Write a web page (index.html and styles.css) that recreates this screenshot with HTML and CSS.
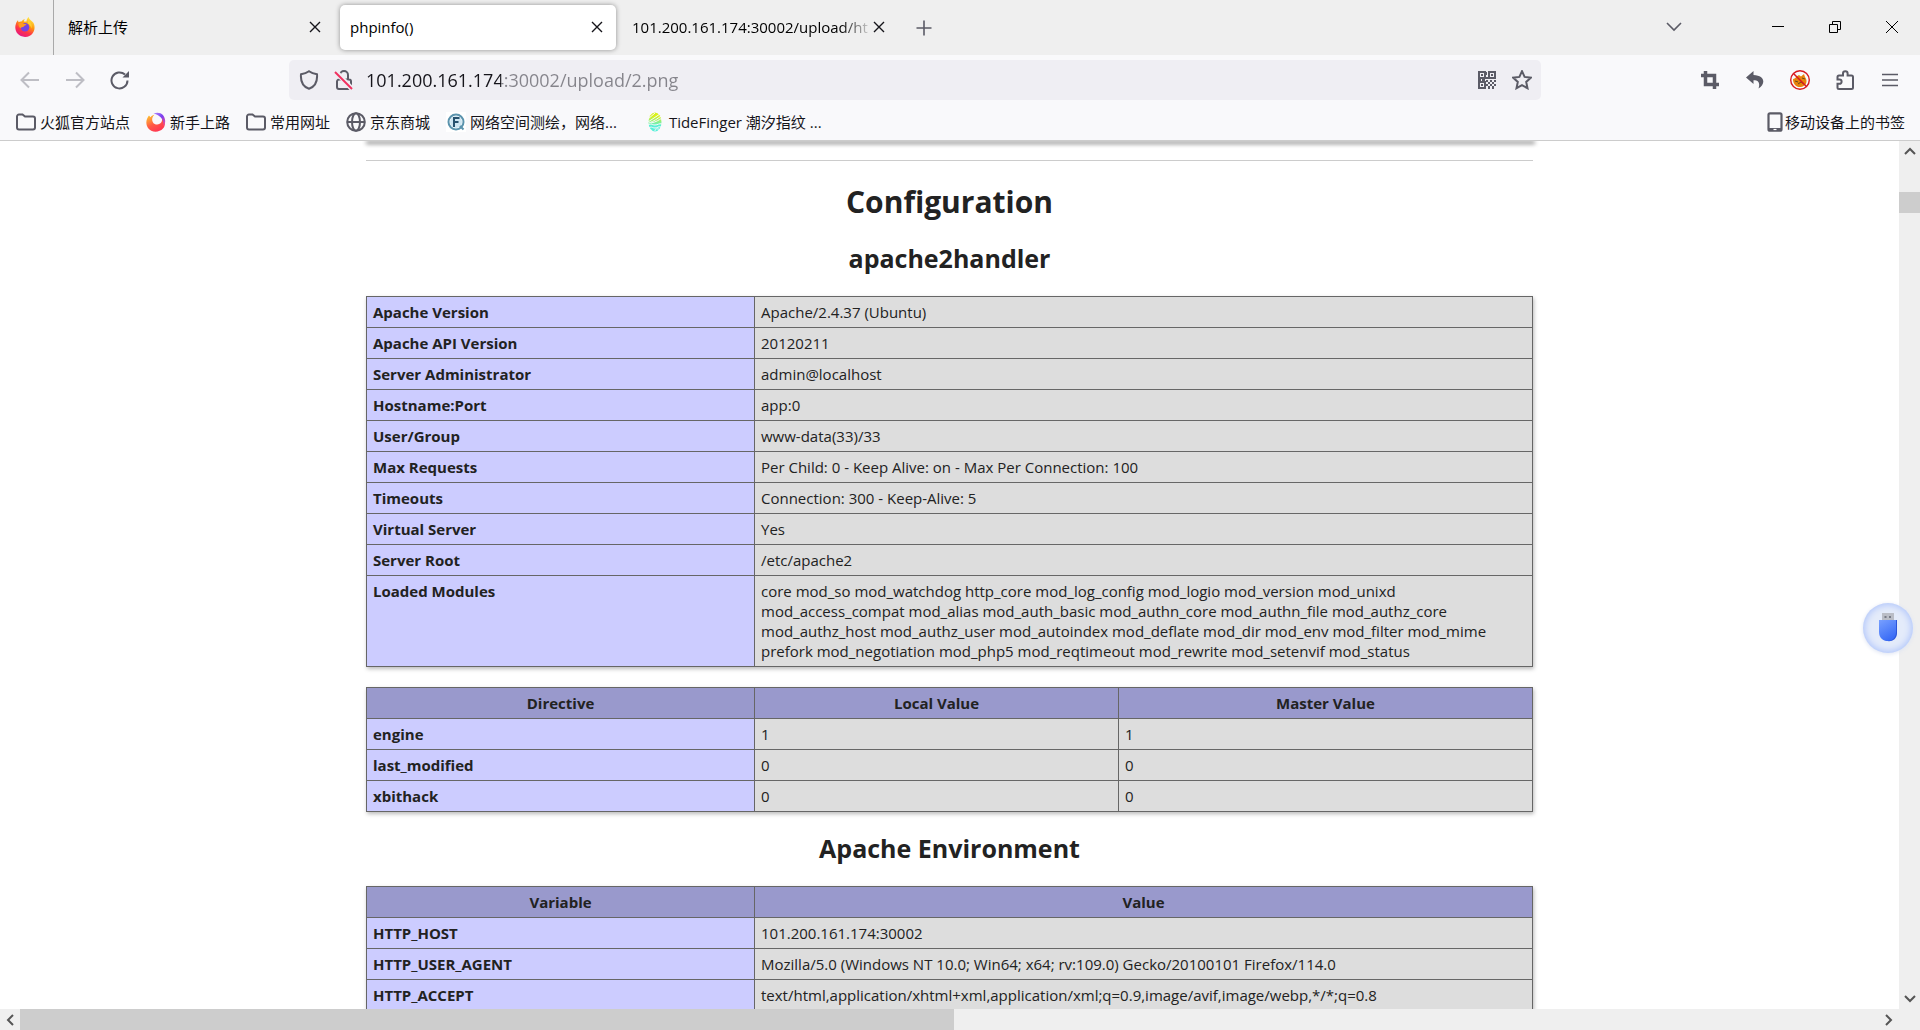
FILE: index.html
```html
<!DOCTYPE html>
<html lang="zh-CN">
<head>
<meta charset="utf-8">
<title>phpinfo()</title>
<link rel="stylesheet" href="styles.css">
</head>
<body>
<div class="browser">
  <header class="chrome">
    <div class="tab-strip">
      <button class="view-button" aria-label="Firefox View">
        <svg width="20" height="20" viewBox="0 0 20 20"><defs><linearGradient id="fire" x1="0.8" y1="0" x2="0.3" y2="1"><stop offset="0" stop-color="#fff44f"/><stop offset="0.4" stop-color="#ff980e"/><stop offset="0.7" stop-color="#ff3647"/><stop offset="1" stop-color="#e31587"/></linearGradient></defs><path fill="url(#fire)" d="M1 6.500C1.500 5 2 4.200 3 3.300l.5 1.900c1-.8 2-.9 3-.7C7.500 2.800 9 2.300 10 2.300c-.7.600-1.200 1.400-1 2.200h2.500C11.600 2.500 12.500 1 13.700 0c.3 2.500 3 3.500 4.500 5.600 3 4.500 1.300 14-8 14.300C2 20-1.300 12.500 1 6.500z"/><circle cx="10" cy="10.300" r="4.300" fill="#7543e3"/><path fill="#ff9a1f" d="M3.500 6.500c2-1.300 4-1 5.500.3l2.500.5c-.3 1.500-2.700 1-2.800 2.500-1 .5-2.500 0-3 1.500-1.500-1-2.500-3-2.200-4.800z"/><path fill="#ffcf30" d="M13 3c3 2 4.500 5 3.500 8.500-.5-2-1.700-4-3.500-5z"/></svg>
      </button>
      <div class="tab"><button class="tab-title">解析上传</button><button class="tab-close" aria-label="关闭标签页"><svg width="12" height="12" viewBox="0 0 12 12"><path d="M1 1l10 10M11 1L1 11"/></svg></button></div>
      <div class="tab tab-selected"><button class="tab-title">phpinfo()</button><button class="tab-close" aria-label="关闭标签页"><svg width="12" height="12" viewBox="0 0 12 12"><path d="M1 1l10 10M11 1L1 11"/></svg></button></div>
      <div class="tab"><button class="tab-title tab-title-long">101.200.161.174:30002/upload/ht</button><button class="tab-close" aria-label="关闭标签页"><svg width="12" height="12" viewBox="0 0 12 12"><path d="M1 1l10 10M11 1L1 11"/></svg></button></div>
      <button class="new-tab" aria-label="新建标签页"><svg width="16" height="16" viewBox="0 0 16 16"><path d="M8 .5v15M.5 8h15"/></svg></button>
      <div class="window-controls">
        <button class="list-tabs" aria-label="列出所有标签页"><svg width="16" height="10" viewBox="0 0 16 10"><path d="M1 1l7 7 7-7"/></svg></button>
        <button aria-label="最小化"><svg width="12" height="12" viewBox="0 0 12 12"><path d="M0 5.500h12"/></svg></button>
        <button aria-label="还原"><svg width="12" height="12" viewBox="0 0 12 12"><path d="M.5 3.500h8v8h-8zM3.500 3.500v-3h8v8h-3"/></svg></button>
        <button aria-label="关闭"><svg width="14" height="14" viewBox="0 0 14 14"><path d="M1 1l12 12M13 1L1 13"/></svg></button>
      </div>
    </div>

    <div class="toolbar">
      <div class="nav-buttons">
        <button class="nav-disabled" aria-label="后退"><svg width="20" height="20" viewBox="0 0 20 20"><path d="M19 10H2M9 2.500L1.500 10 9 17.500"/></svg></button>
        <button class="nav-disabled" aria-label="前进"><svg width="20" height="20" viewBox="0 0 20 20"><path d="M1 10h17M11 2.500l7.500 7.500-7.500 7.500"/></svg></button>
        <button aria-label="刷新"><svg width="20" height="20" viewBox="0 0 20 20"><path d="M17.500 10.500A8 8 0 1 1 15 4.600"/><path class="solid" d="M19 1v6.500h-6.500z"/></svg></button>
      </div>
      <div class="url-bar">
        <button aria-label="隐私保护"><svg width="20" height="20" viewBox="0 0 20 20"><path d="M10 1.200C12.500 3 15 3.800 18 4.300c.5 6-1.200 12-8 14.500C3.200 16.300 1.500 10.300 2 4.300 5 3.800 7.500 3 10 1.200z"/></svg></button>
        <button aria-label="连接不安全"><svg width="20" height="20" viewBox="0 0 20 20"><path d="M6 9.500V5a4 4 0 0 1 8 0v4.500M5 9.500h10a2 2 0 0 1 2 2V17a2 2 0 0 1-2 2H5a2 2 0 0 1-2-2v-5.500a2 2 0 0 1 2-2z"/><path stroke="#efeef3" stroke-width="5" d="M3 3l15 16"/><path stroke="#f0305f" d="M1 2l17 17"/></svg></button>
        <input class="url-input" type="text" aria-label="地址" value="101.200.161.174:30002/upload/2.png">
        <button aria-label="二维码"><svg width="18" height="18" viewBox="0 0 18 18"><path d="M1 1h6v6H1zM11 1h6v6h-6zM1 11h6v6H1z"/><path class="solid" d="M3 3h2v2H3zM13 3h2v2h-2zM3 13h2v2H3zM8 1h1v3H8zM8 6h3v2H8zM0 8h3v2H0zM4 8h3v2H4zM8 9h2v2H8zM10 11h2v2h-2zM12 9h2v2h-2zM14 11h2v2h-2zM16 9h2v2h-2zM8 13h2v2H8zM12 13h2v2h-2zM16 13h2v2h-2zM10 15h2v3h-2zM14 15h2v3h-2z"/></svg></button>
        <button aria-label="为此页添加书签"><svg width="20" height="20" viewBox="0 0 20 20"><path d="M10 1.200l2.600 5.700 6.200.8-4.600 4.200 1.300 6.300L10 15.100l-5.500 3.100 1.300-6.300L1.200 7.700l6.200-.8z"/></svg></button>
      </div>
      <div class="tool-buttons">
        <button aria-label="裁剪"><svg width="18" height="18" viewBox="0 0 18 18"><path stroke-width="3.500" d="M0 4.500h13.500V18M4.500 0v13.500H18"/></svg></button>
        <button aria-label="撤销"><svg width="18" height="18" viewBox="0 0 18 18"><path class="solid" d="M7.500 0L0 6.500 7.500 13V9.200c4.500-.2 7 2.300 5 8.300 7.500-5 6.500-13-5-13.500z"/></svg></button>
        <button aria-label="已禁用代理"><svg width="20" height="20" viewBox="0 0 20 20"><path fill="#e8830c" stroke="none" d="M3 9c1.500 0 2.500-1 3.500-2.500L9 5l2 1.500L14 4l1 3c3 4 1.500 9-4 10-5 .5-8-3-8-8z"/><path stroke="#6b4a20" stroke-width="1" d="M5 11l3 1M8 14l3-2 3 2M12 8l3 1"/><circle cx="10" cy="10" r="9.300" stroke="#d71920" stroke-width="1.400"/><path stroke="#d71920" stroke-width="1.500" d="M3.500 3.500l13 13"/></svg></button>
        <button aria-label="扩展"><svg width="20" height="20" viewBox="0 0 20 20"><path d="M4 19a1.500 1.500 0 0 1-1.500-1.500v-3.700h2a2.100 2.100 0 0 0 0-4.200h-2V7A1.500 1.500 0 0 1 4 5.500h4V3.500a2.300 2.300 0 0 1 4.600 0v2h3.900A1.500 1.500 0 0 1 18 7v10.500a1.500 1.500 0 0 1-1.500 1.500z"/></svg></button>
        <button aria-label="打开应用程序菜单"><svg width="16" height="14" viewBox="0 0 16 14"><path stroke-width="1.500" d="M0 1.500h16M0 7h16M0 12.500h16"/></svg></button>
      </div>
    </div>

    <nav class="bookmarks">
      <a href="#"><svg width="20" height="20" viewBox="0 0 20 20"><path d="M1 15.500v-11a2 2 0 0 1 2-2h3.500L9 4.500h8a2 2 0 0 1 2 2v9a2 2 0 0 1-2 2H3a2 2 0 0 1-2-2z"/></svg>火狐官方站点</a>
      <a href="#"><svg width="20" height="20" viewBox="0 0 20 20"><defs><linearGradient id="flame" x1="0.800" y1="1" x2="0.200" y2="0"><stop offset="0" stop-color="#ff2f55"/><stop offset="0.500" stop-color="#ff5a45"/><stop offset="1" stop-color="#ffc02e"/></linearGradient><linearGradient id="ring" x1="0" y1="0" x2="1" y2="1"><stop offset="0" stop-color="#b58cff"/><stop offset="0.500" stop-color="#7a3ff0"/><stop offset="1" stop-color="#ff4f8e"/></linearGradient></defs><path fill="url(#flame)" stroke="none" d="M3 3.500l1.500 1.700C6 3.500 7 3 8.500 2.800 6 5 5.500 8 7 10.500c2 3 7 2.500 8.500-.5 1-2 .5-4 0-5 4 3 4.500 8 1.500 11.500C13 21 5 20.500 2 16-1 11.500.5 6.500 3 3.500z"/><path fill="url(#ring)" stroke="none" d="M7.500 1.500C14-1 19 3 19.200 9c0 2-.7 4-1.700 5 .5-6-2.500-10.500-10-12.500z"/></svg>新手上路</a>
      <a href="#"><svg width="20" height="20" viewBox="0 0 20 20"><path d="M1 15.500v-11a2 2 0 0 1 2-2h3.500L9 4.500h8a2 2 0 0 1 2 2v9a2 2 0 0 1-2 2H3a2 2 0 0 1-2-2z"/></svg>常用网址</a>
      <a href="#"><svg width="20" height="20" viewBox="0 0 20 20"><circle cx="10" cy="10" r="8.800"/><ellipse cx="10" cy="10" rx="4" ry="8.800"/><path d="M1.200 10h17.600"/></svg>京东商城</a>
      <a href="#"><svg width="20" height="20" viewBox="0 0 20 20"><path fill="#fff" stroke="none" d="M0 0h20v20H0z"/><circle cx="10" cy="10" r="7.500" stroke="#5a93ad" stroke-width="2"/><circle cx="10" cy="10" r="6" fill="#cfe6f2" stroke="none"/><path stroke="#27516e" stroke-width="2" d="M8 15V6h5.500M8 10h4.500"/><path stroke="#5a93ad" d="M14 14l3.500 3.500"/></svg>网络空间测绘，网络...</a>
      <a class="bookmark-wide" href="#"><svg width="20" height="20" viewBox="0 0 20 20"><defs><linearGradient id="tide" x1="0" y1="0" x2="0" y2="1"><stop offset="0.200" stop-color="#d9f218"/><stop offset="0.700" stop-color="#55f0d8"/></linearGradient></defs><ellipse cx="10" cy="10" rx="6.500" ry="9.500" fill="url(#tide)" stroke="none"/><path stroke="#f9f9fb" stroke-width="1" d="M3 7l7-6M3 10L15 2M4 11c5-2 8-4 12-7M6 11c5-1 8-3 11-5M3 13c3-2 4 0 7 0s4-2 7-1M4 16c3-2 3 0 6 0s3-2 6-1M10 19c0-3 2-2 4-2"/></svg>TideFinger 潮汐指纹 ...</a>
      <a class="bookmark-mobile" href="#"><svg width="16" height="20" viewBox="0 0 16 20"><rect x="1.500" y="1.300" width="13" height="17.400" rx="1.500" stroke-width="2.200"/><path stroke-width="3" d="M2 17.500h12"/><path stroke="#fff" stroke-width="1.200" d="M6.500 17.500h3"/></svg>移动设备上的书签</a>
    </nav>
  </header>

  <div class="viewport">
    <main class="page">
      <div class="previous-table"></div>
      <hr>
      <h1>Configuration</h1>
      <h2>apache2handler</h2>
      <table>
        <colgroup><col class="col-name"><col></colgroup>
        <tbody>
        <tr><th scope="row">Apache Version</th><td>Apache/2.4.37 (Ubuntu)</td></tr>
        <tr><th scope="row">Apache API Version</th><td>20120211</td></tr>
        <tr><th scope="row">Server Administrator</th><td>admin@localhost</td></tr>
        <tr><th scope="row">Hostname:Port</th><td>app:0</td></tr>
        <tr><th scope="row">User/Group</th><td>www-data(33)/33</td></tr>
        <tr><th scope="row">Max Requests</th><td>Per Child: 0 - Keep Alive: on - Max Per Connection: 100</td></tr>
        <tr><th scope="row">Timeouts</th><td>Connection: 300 - Keep-Alive: 5</td></tr>
        <tr><th scope="row">Virtual Server</th><td>Yes</td></tr>
        <tr><th scope="row">Server Root</th><td>/etc/apache2</td></tr>
        <tr><th scope="row">Loaded Modules</th><td>core mod_so mod_watchdog http_core mod_log_config mod_logio mod_version mod_unixd<br>mod_access_compat mod_alias mod_auth_basic mod_authn_core mod_authn_file mod_authz_core<br>mod_authz_host mod_authz_user mod_autoindex mod_deflate mod_dir mod_env mod_filter mod_mime<br>prefork mod_negotiation mod_php5 mod_reqtimeout mod_rewrite mod_setenvif mod_status</td></tr>
        </tbody>
      </table>
      <table>
        <colgroup><col class="col-name"><col class="col-local"><col></colgroup>
        <thead><tr><th>Directive</th><th>Local Value</th><th>Master Value</th></tr></thead>
        <tbody>
        <tr><th scope="row">engine</th><td>1</td><td>1</td></tr>
        <tr><th scope="row">last_modified</th><td>0</td><td>0</td></tr>
        <tr><th scope="row">xbithack</th><td>0</td><td>0</td></tr>
        </tbody>
      </table>
      <h2>Apache Environment</h2>
      <table>
        <colgroup><col class="col-name"><col></colgroup>
        <thead><tr><th>Variable</th><th>Value</th></tr></thead>
        <tbody>
        <tr><th scope="row">HTTP_HOST</th><td>101.200.161.174:30002</td></tr>
        <tr><th scope="row">HTTP_USER_AGENT</th><td>Mozilla/5.0 (Windows NT 10.0; Win64; x64; rv:109.0) Gecko/20100101 Firefox/114.0</td></tr>
        <tr><th scope="row">HTTP_ACCEPT</th><td>text/html,application/xhtml+xml,application/xml;q=0.9,image/avif,image/webp,*/*;q=0.8</td></tr>
        </tbody>
      </table>
    </main>
    <div class="scroll-y">
      <button aria-label="向上滚动"><svg width="12" height="8" viewBox="0 0 12 8"><path d="M1 7l5-5 5 5"/></svg></button>
      <div class="track"><div class="thumb"></div></div>
      <button aria-label="向下滚动"><svg width="12" height="8" viewBox="0 0 12 8"><path d="M1 1l5 5 5-5"/></svg></button>
    </div>
    <button class="usb-float" aria-label="U 盘"><svg width="24" height="32" viewBox="0 0 24 32"><defs><linearGradient id="usb" x1="0" y1="0" x2="0.500" y2="1"><stop offset="0" stop-color="#78a0ff"/><stop offset="1" stop-color="#3a6cf6"/></linearGradient></defs><path fill="#babdc6" d="M6 1h12v8H6z"/><path fill="#777b86" d="M8.500 4h2v2h-2zM13 4h2v2h-2z"/><path fill="#2b55da" d="M5 8h16v13c0 11-16 11-16 0z"/><path fill="url(#usb)" d="M3 8h17v12c0 12-17 12-17 0z"/></svg></button>
  </div>

  <div class="scroll-x">
    <button aria-label="向左滚动"><svg width="8" height="12" viewBox="0 0 8 12"><path d="M7 1L2 6l5 5"/></svg></button>
    <div class="track"><div class="thumb"></div></div>
    <button aria-label="向右滚动"><svg width="8" height="12" viewBox="0 0 8 12"><path d="M1 1l5 5-5 5"/></svg></button>
    <div class="scroll-corner"></div>
  </div>
</div>
</body>
</html>
```
FILE: styles.css
```css
* {
  box-sizing: border-box;
}

body {
  margin: 0;
  background: #fff;
  color: #222;
  font-family: "Open Sans", "Noto Sans CJK SC", sans-serif;
  font-size: 15px;
}

button {
  display: flex;
  align-items: center;
  justify-content: center;
  margin: 0;
  padding: 0;
  border: 0;
  background: none;
  color: inherit;
  font: inherit;
}

svg {
  flex: none;
  fill: none;
  stroke: #5b5b66;
  stroke-width: 2;
}

svg .solid {
  fill: #5b5b66;
  stroke: none;
}

.browser {
  display: flex;
  flex-direction: column;
  height: 100vh;
  overflow: hidden;
}

.chrome {
  flex: none;
  border-bottom: 1px solid #ccc;
  background: #f9f9fb;
  color: #15141a;
}

/* Tabs */

.tab-strip {
  display: flex;
  height: 55px;
  background: #efefef;
}

.view-button {
  width: 54px;
  padding: 0 4px 2px 0;
  border-right: 1px solid #a9a9a9;
}

.view-button svg {
  stroke: none;
}

.tab {
  display: flex;
  align-items: center;
  width: 276px;
  height: 45px;
  margin: 5px 3px;
  padding: 0 13px 2px 10px;
  border-radius: 5px;
}

.view-button + .tab {
  margin-left: 4px;
}

.tab-selected {
  background: #fff;
  box-shadow: 0 0 5px rgba(0, 0, 0, 0.4);
}

.tab-title {
  flex: 1;
  justify-content: flex-start;
  min-width: 0;
  overflow: hidden;
  color: #000;
  white-space: nowrap;
}

.tab-title-long {
  mask-image: linear-gradient(to left, transparent, #000 32px);
}

.tab-close svg {
  stroke: #15141a;
  stroke-width: 1.4;
}

.new-tab {
  width: 40px;
  margin-left: 3px;
}

.new-tab svg,
.list-tabs svg {
  stroke-width: 1.6;
}

.window-controls {
  display: flex;
  margin-left: auto;
}

.window-controls button {
  width: 57px;
  padding-bottom: 2px;
}

.window-controls .list-tabs {
  width: 56px;
  margin-right: 47px;
}

.window-controls button:not(.list-tabs) svg {
  stroke: #000;
  stroke-width: 1;
}

/* Navigation toolbar */

.toolbar {
  display: flex;
  align-items: center;
  height: 50px;
  padding: 0 8px 0 7px;
}

.nav-buttons,
.tool-buttons {
  display: flex;
}

.nav-buttons {
  width: 282px;
}

.nav-buttons button,
.tool-buttons button {
  width: 45px;
  height: 40px;
}

.nav-disabled svg {
  stroke: #bebec4;
}

.url-bar {
  display: flex;
  flex: 1;
  align-items: center;
  height: 40px;
  margin-right: 146px;
  padding: 0 2px;
  border-radius: 5px;
  background: #efeef3;
}

.url-bar button {
  width: 35px;
  height: 40px;
}

.url-input {
  flex: 1;
  min-width: 0;
  padding: 0 0 0 5px;
  border: 0;
  background: linear-gradient(to right, #15141a 140px, #85848b 140px);
  background-clip: text;
  color: transparent;
  font: inherit;
  font-size: 18px;
}

/* Bookmarks */

.bookmarks {
  display: flex;
  align-items: center;
  gap: 15px;
  height: 35px;
  padding: 0 15px 2px 16px;
}

.bookmarks a {
  display: flex;
  align-items: center;
  gap: 4px;
  color: inherit;
  line-height: 20px;
  text-decoration: none;
  white-space: nowrap;
}

.bookmarks a + a {
  padding-left: 1px;
}

.bookmarks .bookmark-wide {
  margin-left: 12px;
}

.bookmarks .bookmark-mobile {
  gap: 2px;
  margin-left: auto;
}

/* Page content */

.viewport {
  position: relative;
  display: flex;
  flex: 1;
  min-height: 0;
}

.page {
  flex: 1;
  overflow: hidden;
  padding: 0 20px;
  text-align: center;
}

.page > * {
  width: 1167px;
  max-width: 100%;
  margin: 0 auto;
}

.previous-table {
  height: 1px;
  margin-top: -1px;
  box-shadow: 1px 2px 4px 1px #888;
}

.page hr {
  height: 1px;
  margin-top: 19px;
  border: 0;
  background: #ccc;
}

h1 {
  padding: 20px 0 16px;
  font-size: 30px;
  line-height: 42px;
}

h2 {
  padding: 2px 0 21px;
  font-size: 25px;
  line-height: 34px;
}

table {
  border-collapse: collapse;
  table-layout: fixed;
  box-shadow: 1px 2px 4px #bbb;
  font-size: 15px;
  line-height: 20px;
  text-align: left;
}

.page table + table {
  margin-top: 20px;
}

table + h2 {
  padding-top: 19px;
}

.col-name {
  width: 388px;
}

.col-local {
  width: 364px;
}

th,
td {
  padding: 5px 6px;
  border: 1px solid #666;
  vertical-align: top;
}

td {
  background: #ddd;
  white-space: nowrap;
}

tbody th {
  background: #ccf;
}

thead th {
  background: #99c;
  text-align: center;
}

/* Scroll bars */

.scroll-y,
.scroll-x {
  display: flex;
  flex: none;
  background: #efefef;
}

.scroll-y {
  flex-direction: column;
  width: 21px;
}

.scroll-x {
  height: 21px;
}

.scroll-y button {
  height: 20px;
}

.scroll-x button {
  width: 20px;
}

.scroll-y svg,
.scroll-x svg {
  stroke: #555;
}

.track {
  display: flex;
  flex: 1;
}

.scroll-y .track {
  flex-direction: column;
}

.scroll-y .track::before {
  flex: 0 0 31px;
  content: "";
}

.thumb {
  background: #cdcdcd;
}

.scroll-y .thumb {
  height: 21px;
}

.scroll-x .thumb {
  width: calc(50% + 4px);
}

.scroll-corner {
  width: 21px;
}

.usb-float {
  position: absolute;
  top: 462px;
  right: 7px;
  width: 50px;
  height: 50px;
  border-radius: 50%;
  background: #e4ebfa;
  box-shadow: inset 0 0 6px 2px #b4c8fb, 0 1px 4px #dde3f2;
}

.usb-float svg {
  stroke: none;
}
```
